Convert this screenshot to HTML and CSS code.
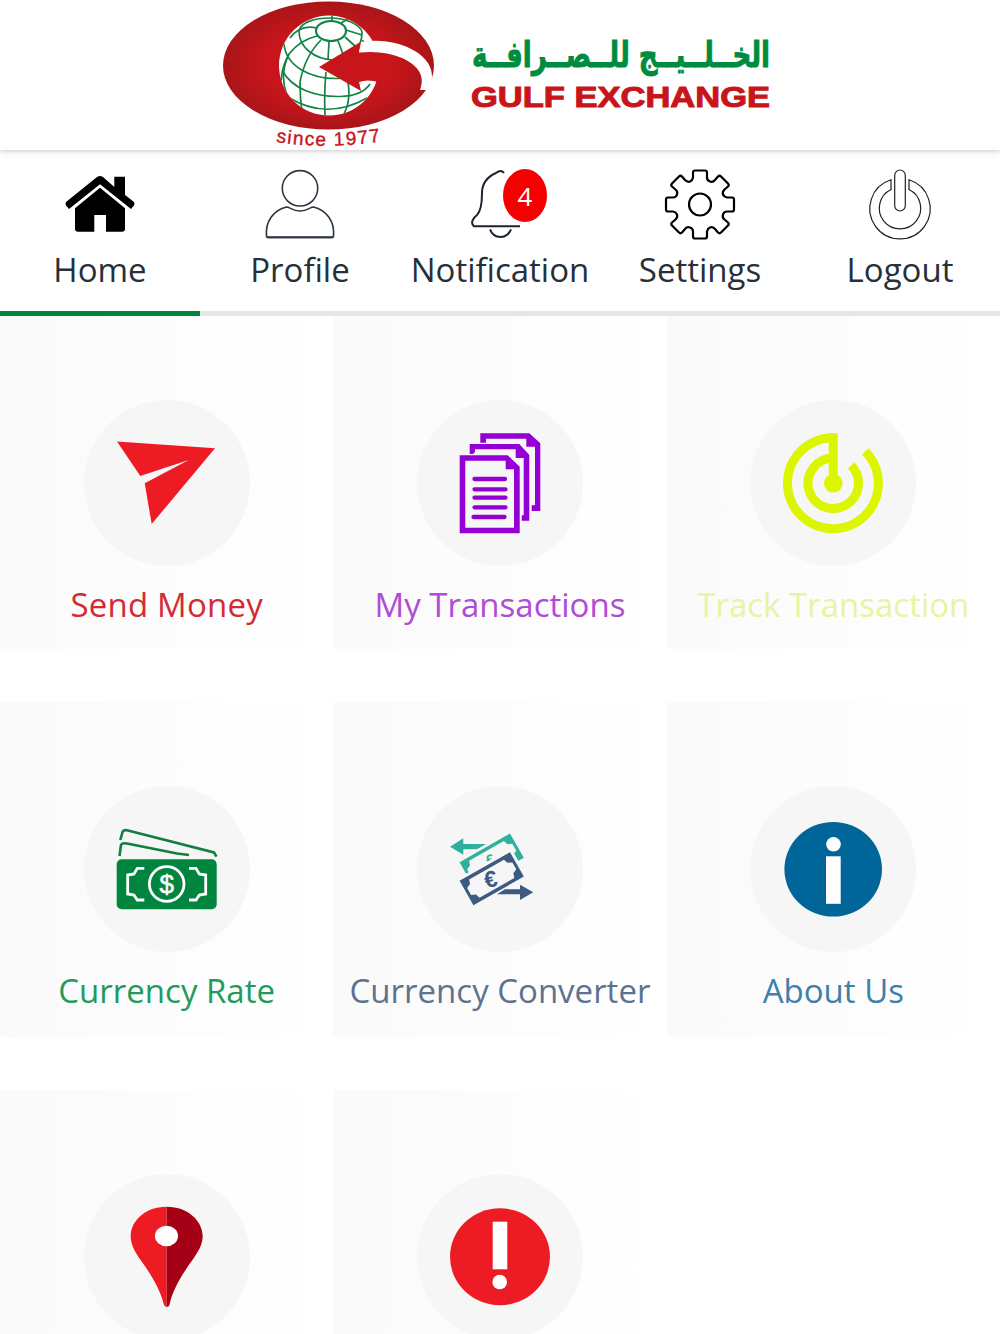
FILE: index.html
```html
<!DOCTYPE html>
<html lang="en">
<head>
    <meta charset="UTF-8">
    <meta name="viewport" content="width=device-width, initial-scale=1.0">
    <title>Gulf Exchange</title>
    <link rel="stylesheet" href="styles.css">
</head>
<body>
    <header class="header">
        <svg class="logo" viewBox="220 0 560 150">
            <defs>
                <radialGradient id="oval">
                    <stop offset="0.6" stop-color="#c8151b" />
                    <stop offset="1" stop-color="#a91519" />
                </radialGradient>
                <clipPath id="globe"><circle cx="329" cy="65.6" r="50" /></clipPath>
                <path id="since" d="M276 142Q328 150 384 141" />
            </defs>
            <ellipse cx="328.5" cy="65.5" rx="105.5" ry="64" fill="url(#oval)" />
            <circle cx="329" cy="65.6" r="50" fill="#fff" />
            <g clip-path="url(#globe)" fill="none" stroke="#128444" stroke-width="1.7">
                <ellipse cx="331" cy="31" rx="15" ry="10" stroke-width="2.200" />
                <path d="M299 31C299 48 315 59 333 60S362 48 362 32C360 24 345 18 330 18S301 22 299 31" />
                <path d="M284 44C286 66 310 79 338 78.500L365 76M282 70C292 89 315 97 340 96.500Q362 96 370 84M288 97Q326 121 367 98" />
                <path d="M317 36Q300 40 289 54Q282 66 281 82M321 40Q305 56 300 82Q300 98 302 112M329 42L328 60M326 72Q324 92 325 116M338 41L343 54M345 37L355 46M348 82Q351 101 344 114M317 28Q300 24 290 38M332 21V15M341 23L350 18M346 30L362 35" />
                <path d="M289 54Q279 75 287 95M362 40L374 52" />
            </g>
            <path d="M319 67L362 41L359 52L384 52V86L379 82Q367 79 359 82L361 91Z" fill="#c8151b" />
            <path d="M361 42C395 36 434 53 432 78L430 86L434 90H420C426 75 417 65 402 58Q384 50 359 52.500Z" fill="#fff" />
            <text class="logo-since"><textPath href="#since" textLength="105">since 1977</textPath></text>
            <text class="logo-arabic" x="472" y="67" textLength="298" lengthAdjust="spacingAndGlyphs">الخــلــيــج للــصــرافــة</text>
            <text class="logo-name" x="471" y="106.500" textLength="299" lengthAdjust="spacingAndGlyphs">GULF EXCHANGE</text>
        </svg>
    </header>

    <nav class="nav">
        <a class="nav-item active">
            <svg class="nav-icon" viewBox="0 0 70 70">
                <path d="M1 33L32 8Q35 6 38 8L49.300 18V7.700H60V26L69 33Q70 35 69 36.500L66 40L35 15.300L4 40L1 36.500Q0 35 1 33Z" />
                <path d="M10 39.300L35 18.700L60 39.300V60Q60 62.700 57 62.700H41V46H29.300V62.700H13Q10 62.700 10 60Z" />
            </svg>
            <span>Home</span>
        </a>
        <a class="nav-item">
            <svg class="nav-icon" viewBox="0 0 70 70" fill="none" stroke="#2c3540" stroke-width="1.600">
                <circle cx="35" cy="19.300" r="17.700" />
                <path d="M1.500 67.500C0 52 9 41 21.500 38C25 38 27 42 35 42S45 38 48.500 38C61 41 70 52 68.500 67.500Q68.500 68.500 67 68.500H3Q1.500 68.500 1.500 67.500Z" />
                <path d="M2 68.300H68" stroke-width="2" />
            </svg>
            <span>Profile</span>
        </a>
        <a class="nav-item">
            <svg class="nav-icon" viewBox="0 0 70 70" fill="none" stroke="#1b2430" stroke-width="2">
                <path d="M39 4Q36 0 31 4C22 8 17 14 17 24C17 35 16 42 12 46C8 49 5 54 9 57.300H55" />
                <path d="M25 60.300Q28 68 35.500 68T46 60.300" />
            </svg>
            <span class="badge">4</span>
            <span>Notification</span>
        </a>
        <a class="nav-item">
            <svg class="nav-icon" viewBox="-35 -35.500 70 70" fill="none" stroke="#000" stroke-width="2.200" stroke-linejoin="round">
                <path d="M-5-34H5Q7-34 7-32V-27Q7-24 10-23T15-24.500L18-28Q19.500-29.500 21-28L28-21Q29.500-19.500 28-18L24.500-15Q22-12.500 23-10T27-7H32Q34-7 34-5V5Q34 7 32 7H27Q24 7 23 10T24.500 15L28 18Q29.500 19.500 28 21L21 28Q19.500 29.500 18 28L15 24.500Q12.500 22 10 23T7 27V32Q7 34 5 34H-5Q-7 34-7 32V27Q-7 24-10 23T-15 24.500L-18 28Q-19.500 29.500-21 28L-28 21Q-29.500 19.500-28 18L-24.500 15Q-22 12.500-23 10T-27 7H-32Q-34 7-34 5V-5Q-34-7-32-7H-27Q-24-7-23-10T-24.500-15L-28-18Q-29.500-19.500-28-21L-21-28Q-19.500-29.500-18-28L-15-24.500Q-12.500-22-10-23T-7-27V-32Q-7-34-5-34Z" />
                <circle r="11" />
            </svg>
            <span>Settings</span>
        </a>
        <a class="nav-item">
            <svg class="nav-icon" viewBox="0 0 70 70" fill="none" stroke="#222" stroke-width="1.200">
                <rect x="29.700" y="1" width="10.600" height="41" rx="5.300" />
                <path d="M26 10.800A30.200 30.200 0 1 0 44 10.800V20.500A20.700 20.700 0 1 1 26 20.500Z" />
            </svg>
            <span>Logout</span>
        </a>
    </nav>

    <main class="tiles">
        <a class="tile send">
            <svg class="tile-icon" viewBox="0 0 166 166">
                <path d="M33 41.500L131 48.300L67.700 124L60.700 83.300L104.700 60L56.300 76Z" fill="#ed1c24" />
            </svg>
            <span>Send Money</span>
        </a>
        <a class="tile transactions">
            <svg class="tile-icon" viewBox="0 0 166 166" fill="#9400d3">
                <path d="M42.700 55.300H90.700L102.700 66.700V133.300H42.700ZM48.300 60.700V127.700H97V69.300H88.700V60.700Z" fill-rule="evenodd" />
                <path d="M52.700 44H102.300L112.300 55V120.700H104.700V115.300H106.700V58H98.700V49.300H58V52L56 54H52.700Z" />
                <path d="M63.300 33.300H112.300L123.300 43.300V111H114.700V105.300H118V46.700H109.300V38.700H69V42.700H63.300Z" />
                <path d="M57.500 79H88M57.500 89.300H88.500M57.500 97.700H88.500M57.500 107.300H88.500M56.500 117H87.500" stroke="#9400d3" stroke-width="4.300" stroke-linecap="round" />
            </svg>
            <span>My Transactions</span>
        </a>
        <a class="tile track">
            <svg class="tile-icon" viewBox="0 0 166 166" fill="none" stroke="#dcf500" stroke-width="9">
                <path d="M83.300 37.800A45.500 45.500 0 1 0 115.300 51.300" />
                <path d="M83.300 58.100A25.200 25.200 0 1 0 101.100 65.500" />
                <path d="M83.200 33.300V83" />
                <circle cx="83.300" cy="83.300" r="9.300" fill="#dcf500" stroke="none" />
            </svg>
            <span>Track Transaction</span>
        </a>
        <a class="tile rate">
            <svg class="tile-icon" viewBox="0 0 166 166" fill="none" stroke="#fff" stroke-width="2.800">
                <rect x="32.700" y="73.300" width="100" height="50" rx="5" fill="#00853f" stroke="none" />
                <circle cx="82.700" cy="98" r="17.300" />
                <path d="M60.300 82.300H53.300L50 88L43.700 89V108L50 109L53.300 114H60.300M105 82.300H112L115.300 88L121.700 89V108L115.300 109L112 114H105" />
                <path d="M36.300 54L38.700 45.500Q40 43.500 44 44.500L130 66.500L132.500 70.700M35.500 70L37 59Q38 56.500 43 57.500L93 67.500L105 69" stroke="#11803f" stroke-width="2.600" />
                <text class="dollar" x="82.700" y="107">$</text>
            </svg>
            <span>Currency Rate</span>
        </a>
        <a class="tile converter">
            <svg class="tile-icon" viewBox="0 0 166 166">
                <defs>
                    <path id="note" d="M-29-14H29V14H-29ZM-20-10.500L-21.500-6L-26-4V4L-21.500 6L-20 10.500H20L21.500 6L26 4V-4L21.500-6L20-10.500Z" fill-rule="evenodd" />
                </defs>
                <g fill="#2fb09c">
                    <path d="M33 60.700L46.300 52.300V58H69L60 63.300H46.300V68.700Z" />
                    <use href="#note" transform="translate(74.700 74) rotate(-29.600)" />
                    <text class="euro-small" x="73" y="79" transform="rotate(-30 73 73)">€</text>
                </g>
                <rect x="-32" y="-17" width="64" height="34" fill="#f6f6f6" transform="translate(74.700 92.700) rotate(-29.600)" />
                <g fill="#3d5a80">
                    <use href="#note" transform="translate(74.700 92.700) rotate(-29.600)" />
                    <path d="M116.300 106.300L103 98.700V103.300H88L80 108.300H103V114Z" />
                    <text class="euro" x="73.700" y="101" transform="rotate(-12 73.700 93)">€</text>
                </g>
            </svg>
            <span>Currency Converter</span>
        </a>
        <a class="tile about">
            <svg class="tile-icon" viewBox="0 0 166 166" fill="#fff">
                <ellipse cx="83.200" cy="83.300" rx="48.800" ry="47.300" fill="#006699" />
                <circle cx="83.500" cy="58.300" r="7.300" />
                <rect x="76" y="70.300" width="14.700" height="47.500" />
            </svg>
            <span>About Us</span>
        </a>
        <a class="tile">
            <svg class="tile-icon" viewBox="0 0 166 166">
                <path d="M82.700 32.700C60 32.700 46.700 48 46.700 62C46.700 71 51 78 58 88C70 105 77 118 80 131Q81 133 82.700 133Z" fill="#ed1c24" />
                <path d="M82.700 32.700C105 32.700 118.700 48 118.700 62C118.700 71 114 78 107 88C95 105 88 118 85.500 131Q84.500 133 82.700 133Z" fill="#a50016" />
                <ellipse cx="82.500" cy="62" rx="11.500" ry="10.300" fill="#fff" />
            </svg>
        </a>
        <a class="tile">
            <svg class="tile-icon" viewBox="0 0 166 166" fill="#fff">
                <ellipse cx="83" cy="82.800" rx="50" ry="48.500" fill="#ed1c24" />
                <rect x="75.700" y="47.700" width="14.600" height="47.600" />
                <circle cx="82.700" cy="108" r="7.300" />
            </svg>
        </a>
    </main>
</body>
</html>
```
FILE: styles.css
```css
body {
    font-family: "Open Sans", sans-serif;
    background-color: #fff;
    margin: 0;
}

.header {
    display: flex;
    justify-content: center;
    height: 150px;
    box-shadow: 0 2px 3px rgba(0, 0, 0, 0.12), 0 4px 10px rgba(0, 0, 0, 0.04);
}

.logo {
    width: 560px;
    height: 150px;
    overflow: visible;
}

.logo-since {
    font: 19px "Liberation Sans", sans-serif;
    fill: #c8151b;
    stroke: #c8151b;
    stroke-width: 0.4px;
}

.logo-arabic {
    font: bold 36px "DejaVu Sans", sans-serif;
    fill: #008c40;
    stroke: #008c40;
    stroke-width: 1px;
}

.logo-name {
    font: bold 29px "Liberation Sans", sans-serif;
    fill: #c8151b;
    stroke: #c8151b;
    stroke-width: 1px;
}

.nav {
    display: grid;
    grid-template-columns: repeat(5, 1fr);
    height: 166px;
}

.nav-item {
    position: relative;
    display: flex;
    flex-direction: column;
    align-items: center;
    box-sizing: border-box;
    padding-top: 19px;
    border-bottom: 5px solid #e6e6e6;
    font-size: 33px;
    line-height: 62px;
    color: #25303b;
}

.nav-item.active {
    border-color: #00853f;
}

.nav-icon {
    width: 70px;
    height: 70px;
    overflow: visible;
}

.badge {
    position: absolute;
    top: 19px;
    left: 103px;
    width: 44px;
    height: 53px;
    border-radius: 50%;
    background-color: #f40000;
    color: #fff;
    font-size: 26px;
    line-height: 55px;
    text-align: center;
}

.tiles {
    display: grid;
    grid-template-columns: repeat(3, 1fr);
    grid-template-rows: 333px 335px 244px;
    row-gap: 53px;
    height: 1018px;
    overflow: hidden;
}

.tile {
    display: flex;
    flex-direction: column;
    align-items: center;
    box-sizing: border-box;
    padding-top: 84px;
    background: linear-gradient(90deg, #fafafa, #fff);
    font-size: 33px;
    line-height: 77px;
    white-space: nowrap;
    overflow: hidden;
}

.tile-icon {
    flex-shrink: 0;
    width: 166px;
    height: 166px;
    border-radius: 50%;
    background-color: #f6f6f6;
}

.send {
    color: #d42a33;
    letter-spacing: 0.2px;
}

.transactions {
    color: #b04bd6;
}

.track {
    color: #e9f3a0;
}

.rate {
    color: #229a5b;
}

.converter {
    color: #5c7290;
}

.about {
    color: #3e80ab;
}

.dollar {
    font: 26px "Liberation Sans", sans-serif;
    text-anchor: middle;
    fill: #fff;
    stroke-width: 0.6px;
}

.euro {
    font: bold 23px "Liberation Sans", sans-serif;
    text-anchor: middle;
}

.euro-small {
    font: bold 15px "Liberation Sans", sans-serif;
    text-anchor: middle;
}
```
